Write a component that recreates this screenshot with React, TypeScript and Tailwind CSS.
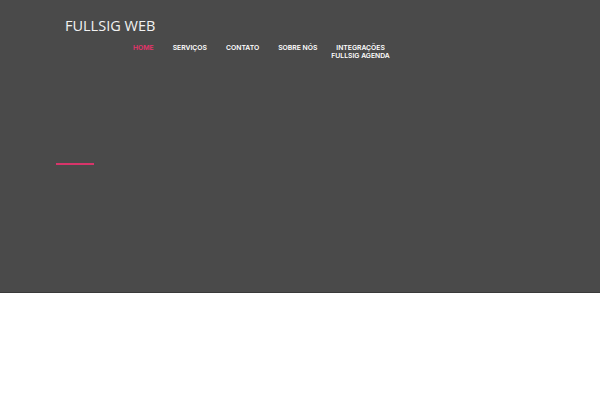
export default function App() {
  const links = ["SERVIÇOS", "CONTATO", "SOBRE NÓS"];
  return (
    <div className="min-h-screen bg-white" style={{ fontFamily: "Inter, 'Liberation Sans', sans-serif" }}>
      {/* Hero */}
      <div className="h-[293px] bg-[#4a4a4a] border-b border-[#3a3a3a]">
        <div className="pl-[65px] pt-[17px]">
          <div className="text-[14.5px] leading-[18px] text-[#f2f2f2]" style={{ fontFamily: "'Open Sans', sans-serif" }}>
            FULLSIG WEB
          </div>
        </div>
        <nav className="flex items-start pl-[133px] pt-[9px] text-[6.8px] leading-[7px] font-semibold text-white">
          <a className="text-[#e8336b] mr-[19px]">HOME</a>
          {links.map((l) => (
            <a key={l} className="mr-[19px]">
              {l}
            </a>
          ))}
          <a className="text-center leading-[7.5px] -ml-[5px]">
            INTEGRAÇÕES
            <br />
            FULLSIG AGENDA
          </a>
        </nav>
        <div className="ml-[56px] mt-[104px] w-[38px] h-[2px] bg-[#d8356a]" />
      </div>
    </div>
  );
}
